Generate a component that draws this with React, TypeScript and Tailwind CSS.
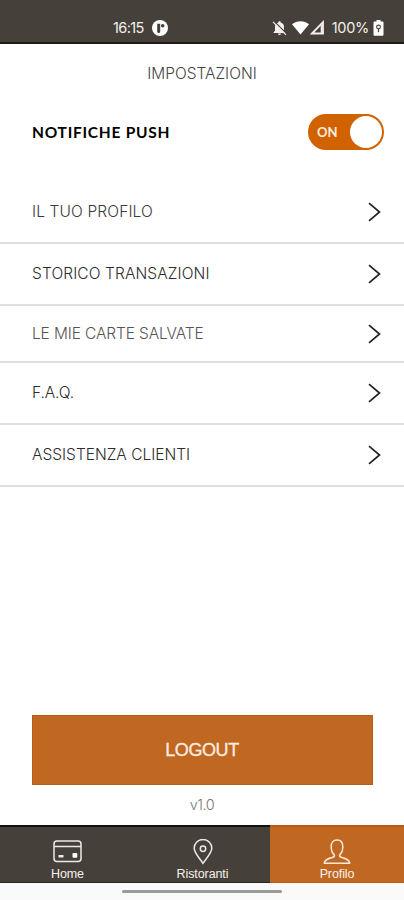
import { useState } from 'react'
import clsx from 'clsx'

interface MenuItem {
  label: string
  row: string
  text: string
}

const MENU: MenuItem[] = [
  { label: 'IL TUO PROFILO', row: 'h-[63px]', text: 'tracking-[0.13px] text-[#3a3a3a]' },
  { label: 'STORICO TRANSAZIONI', row: 'h-[62px]', text: 'tracking-[0.1px] text-[#2c2c2c]' },
  { label: 'LE MIE CARTE SALVATE', row: 'h-[57px]', text: 'tracking-[-0.13px] text-[#555]' },
  { label: 'F.A.Q.', row: 'h-[62px]', text: 'tracking-[-0.1px] text-[#2c2c2c]' },
  { label: 'ASSISTENZA CLIENTI', row: 'h-[62px]', text: 'text-[#2c2c2c]' },
]

export default function App() {
  const [push, setPush] = useState(true)

  return (
    <div className="flex h-[900px] w-[404px] flex-col overflow-hidden bg-white font-['Inter','Liberation_Sans',sans-serif]">
      <StatusBar />

      <h1 className="flex h-[58px] items-center justify-center pt-0.5 text-[15.5px] font-light text-[#444]">
        IMPOSTAZIONI
      </h1>

      <div className="flex h-[60px] items-center justify-between pr-5 pl-8">
        <span className="pt-0.5 font-['Lato',sans-serif] text-[15.5px] font-bold tracking-[0.75px] text-black">
          NOTIFICHE PUSH
        </span>
        <button
          role="switch"
          aria-checked={push}
          onClick={() => setPush(p => !p)}
          className={clsx(
            'flex h-9 w-[76px] items-center justify-between rounded-full pr-0.5 pl-[9px]',
            push ? 'bg-[#d06200]' : 'flex-row-reverse bg-neutral-400',
          )}
        >
          <span className="pt-0.5 font-['Lato',sans-serif] text-[13px] font-bold text-[#ffeedd]">
            {push ? 'ON' : 'OFF'}
          </span>
          <span className="size-8 rounded-full bg-white" />
        </button>
      </div>

      <nav className="mt-[19px]">
        {MENU.map(item => (
          <a
            key={item.label}
            href="#"
            className={clsx('flex items-center justify-between border-b-2 border-[#dfdfdf] pr-[23px] pl-8', item.row)}
          >
            <span className={clsx('text-[15.5px] font-light', item.text)}>{item.label}</span>
            <svg className="h-5 w-[13px]" viewBox="0 0 13 20" fill="none" stroke="#222" strokeWidth="1.7">
              <path d="M1 1.2 11.5 10 1 18.8" />
            </svg>
          </a>
        ))}
      </nav>

      <div className="mt-auto flex flex-col items-center">
        <button className="h-[70px] w-[341px] border border-[#b95c12] bg-[#c06822] font-['Liberation_Sans',sans-serif] text-[18px] tracking-[-0.4px] text-[#ffede2] [-webkit-text-stroke:0.3px_#ffede2]">
          LOGOUT
        </button>
        <p className="flex h-10 items-center text-[14.5px] font-light tracking-[-0.5px] text-[#777]">v1.0</p>
      </div>

      <TabBar />

      <div className="flex h-[17px] shrink-0 items-center justify-center bg-[#fafafa]">
        <span className="h-[3px] w-40 rounded-full bg-[#9a9a9a]" />
      </div>
    </div>
  )
}

function StatusBar() {
  return (
    <header className="flex h-11 shrink-0 items-center border-b-2 border-[#211a15] bg-[#46403a] pt-[13px] pr-5 pl-[113px] text-[14.5px] text-[#f3f0ec]">
      <span className="tracking-[-0.6px]">16:15</span>
      <svg className="ml-2 size-4" viewBox="0 0 16 16">
        <circle cx="8" cy="8" r="8" fill="#fff" />
        <path d="M5.2 3.8h3v7.7a1.5 1.5 0 0 1-3 0z" fill="#46403a" />
        <circle cx="10.7" cy="5.7" r="1.8" fill="#46403a" />
      </svg>

      <div className="ml-auto flex items-center">
        {/* muted bell */}
        <svg className="h-4 w-[15px]" viewBox="0 0 15 16">
          <path d="M7.5 1.2c.8 0 1.2.5 1.2 1.2 2.1.6 3.3 2.2 3.3 4.4v4l1.4 1.5v.7H1.6v-.7L3 10.8v-4c0-2.200 1.200-3.800 3.300-4.400 0-.7.4-1.200 1.200-1.200zM6 13.500h3a1.500 1.500 0 0 1-3 0z" fill="#f3f0ec" />
          <path d="m2.2 1.4 12.5 12.5" stroke="#46403a" strokeWidth="1.3" />
          <path d="m1 1.8 13 13" stroke="#f3f0ec" strokeWidth="1.2" />
        </svg>
        <svg className="ml-[5px] h-[14px] w-[17px]" viewBox="0 0 17 14">
          <path d="M0 3.2C5-.7 12-.7 17 3.2L8.5 13.5z" fill="#fff" />
        </svg>
        <svg className="ml-px h-[15px] w-[15px]" viewBox="0 0 15 15" fill="none" stroke="#f3f0ec" strokeWidth="1.8">
          <path d="M2 13.5 13 2.2v11.3z" />
          <path d="M11.5 5v8" strokeWidth="1.6" />
        </svg>
        <span className="ml-[7px] tracking-[-0.3px]">100%</span>
        <svg className="ml-1 h-4 w-[11px]" viewBox="0 0 11 16">
          <path d="M3.5 0h4v1.6h1.7c.8 0 1.3.5 1.3 1.3v11.6c0 .8-.5 1.3-1.3 1.3H1.8c-.8 0-1.3-.5-1.3-1.3V2.9c0-.8.5-1.3 1.3-1.3h1.7z" fill="#fff" />
          <circle cx="5.5" cy="7" r="1.9" fill="none" stroke="#46403a" strokeWidth="1.1" />
          <path d="M5.5 8.8v3.4" stroke="#46403a" strokeWidth="1.2" />
        </svg>
      </div>
    </header>
  )
}

function TabBar() {
  return (
    <footer className="grid h-[58px] shrink-0 grid-cols-[135px_135px_134px] font-['Liberation_Sans',sans-serif] text-[12.5px] leading-[14px] tracking-[-0.1px] text-[#f6f2ee]">
      <a href="#" className="flex flex-col items-center border-t-2 border-b border-t-[#16110e] border-b-[#2c2621] bg-[#46403a] pt-3">
        <svg className="h-7 w-[29px]" viewBox="0 0 29 28" fill="none" stroke="#eee9e4" strokeWidth="1.5">
          <rect x="1" y="2" width="27" height="20.5" rx="3" />
          <path d="M1 7.5h27" />
          <rect x="5.5" y="16" width="5" height="2.5" fill="#eee9e4" stroke="none" />
          <rect x="19.5" y="14" width="4.8" height="4.8" rx="1" fill="#fff" stroke="none" />
        </svg>
        <span>Home</span>
      </a>
      <a href="#" className="flex flex-col items-center border-t-2 border-b border-t-[#16110e] border-b-[#2c2621] bg-[#46403a] pt-3">
        <svg className="h-7 w-5" viewBox="0 0 20 28" fill="none" stroke="#eee9e4" strokeWidth="1.5">
          <path d="M10 24.3C7.3 20 1.2 14.2 1.2 9.3a8.8 8.8 0 0 1 17.6 0c0 4.9-6.1 10.7-8.8 15z" />
          <circle cx="10" cy="9.8" r="2.7" />
        </svg>
        <span>Ristoranti</span>
      </a>
      <a href="#" className="flex flex-col items-center border-t-2 border-b border-[#b95c12] bg-[#c06822] pt-3">
        <svg className="h-7 w-7" viewBox="0 0 28 28" fill="none" stroke="#ffe9d8" strokeWidth="1.5" strokeLinejoin="round">
          <path d="M11.3 15.8C9.2 14 8.2 11.3 8.2 7.5 8.2 3.2 10.4 1 14 1s5.800 2.200 5.800 6.500c0 3.800-1 6.500-3.100 8.300-.4 1.700.5 2.200 2.100 2.700 4.700 1.300 7.500 2.300 8 5.700H1.200c.5-3.400 3.300-4.400 8-5.700 1.600-.5 2.500-1 2.100-2.700z" />
        </svg>
        <span>Profilo</span>
      </a>
    </footer>
  )
}
